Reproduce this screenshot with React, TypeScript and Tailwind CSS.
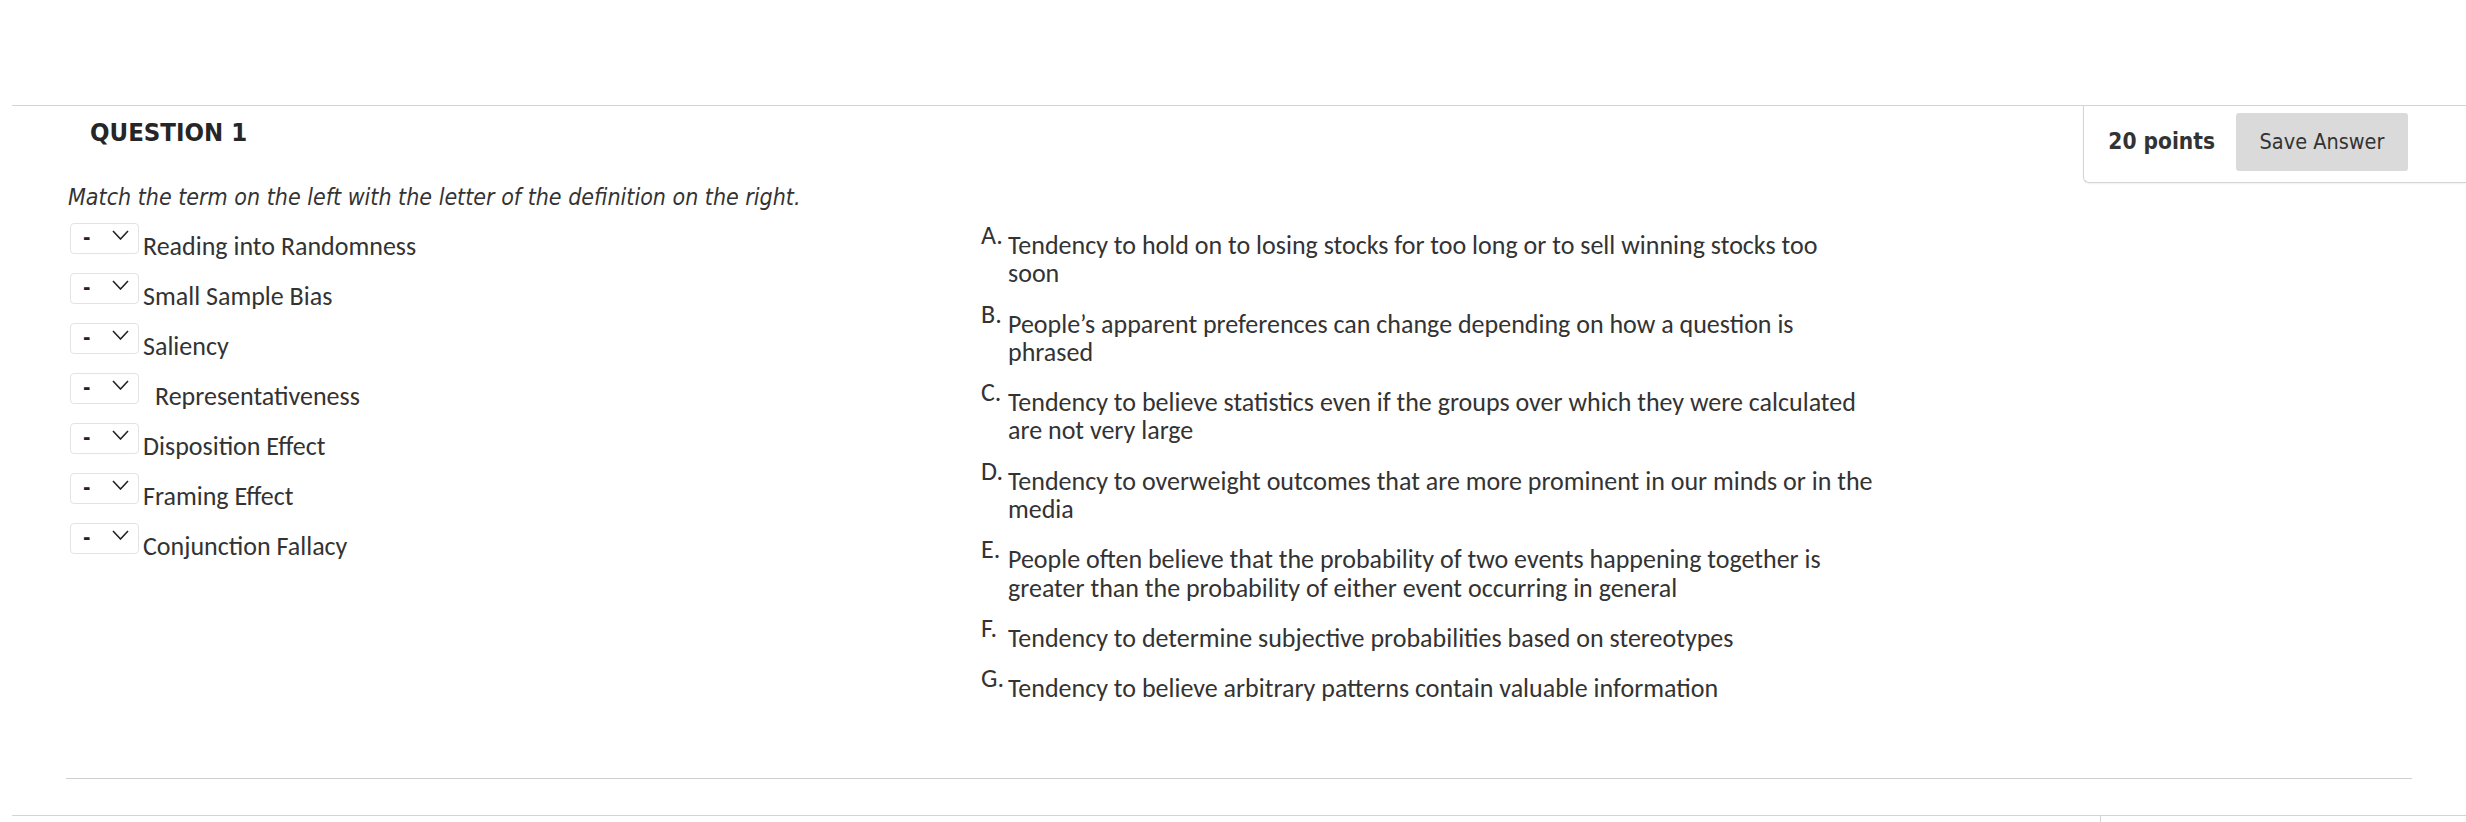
import React from 'react';

const terms = [
  { label: 'Reading into Randomness', indent: false },
  { label: 'Small Sample Bias', indent: false },
  { label: 'Saliency', indent: false },
  { label: 'Representativeness', indent: true },
  { label: 'Disposition Effect', indent: false },
  { label: 'Framing Effect', indent: false },
  { label: 'Conjunction Fallacy', indent: false },
];

// each entry is the lines as they wrap in the original
const answers = [
  { letter: 'A.', lines: ['Tendency to hold on to losing stocks for too long or to sell winning stocks too', 'soon'] },
  { letter: 'B.', lines: ['People\u2019s apparent preferences can change depending on how a question is', 'phrased'] },
  { letter: 'C.', lines: ['Tendency to believe statistics even if the groups over which they were calculated', 'are not very large'] },
  { letter: 'D.', lines: ['Tendency to overweight outcomes that are more prominent in our minds or in the', 'media'] },
  { letter: 'E.', lines: ['People often believe that the probability of two events happening together is', 'greater than the probability of either event occurring in general'] },
  { letter: 'F.', lines: ['Tendency to determine subjective probabilities based on stereotypes'] },
  { letter: 'G.', lines: ['Tendency to believe arbitrary patterns contain valuable information'] },
];

const uiFont = "font-['DejaVu_Sans_Condensed','DejaVu_Sans',sans-serif] font-stretch-condensed";
const bodyFont = "font-['Carlito','Lato',sans-serif]";

const Dropdown = () => (
  <div className="flex h-[31px] w-[69px] shrink-0 items-center justify-between rounded-[4px] border border-[#e3e3e3] bg-white pl-[12px] pr-[9px]">
    <span className={`${uiFont} -mt-[4px] text-[20px] font-bold leading-none text-[#222]`}>-</span>
    <svg width="17" height="10" viewBox="0 0 17 10" className="-mt-[7px]">
      <polyline points="1,1 8.5,9 16,1" fill="none" stroke="#222" strokeWidth="1.6" />
    </svg>
  </div>
);

const App = () => {
  return (
    <div className="min-h-[822px] w-full overflow-hidden bg-white pt-[105px] text-[#333]">
      {/* Question block */}
      <div className="ml-[12px] border-t border-[#d4d4d4]">
        {/* Header */}
        <div className="flex items-start justify-between">
          <h3 className={`${uiFont} pl-[78px] pt-[11px] text-[25.5px] font-bold leading-[30px] text-[#262626]`}>
            QUESTION 1
          </h3>
          <div className="flex items-center gap-[21px] rounded-bl-[6px] border-b border-l border-[#d4d4d4] pb-[11px] pl-[24px] pr-[58px] pt-[7px] shadow-[0_1px_2px_rgba(0,0,0,0.06)]">
            <span className={`${uiFont} text-[22.5px] font-bold text-[#333]`}>20 points</span>
            <button className={`${uiFont} h-[58px] w-[172px] rounded-[3px] bg-[#dadada] text-[21.5px] text-[#333]`}>
              Save Answer
            </button>
          </div>
        </div>

        {/* Instructions */}
        <p className={`${uiFont} pl-[56px] text-[23px] italic leading-[28px] text-[#333]`}>
          Match the term on the left with the letter of the definition on the right.
        </p>

        {/* Matching columns */}
        <div className={`${bodyFont} mt-[12px] grid grid-cols-[911px_1fr] pl-[58px] text-[26px] text-[#333]`}>
          <div className="flex flex-col gap-[13px]">
            {terms.map((t) => (
              <div key={t.label} className="flex items-start">
                <Dropdown />
                <span className={`mt-[9px] leading-[28px] ${t.indent ? 'pl-[16px]' : 'pl-[4px]'}`}>{t.label}</span>
              </div>
            ))}
          </div>

          <div className="-mt-[2px] flex flex-col gap-[12px]">
            {answers.map((a) => (
              <div key={a.letter} className="flex items-start">
                <span className="w-[27px] shrink-0 leading-[28px]">{a.letter}</span>
                <div className="mt-[10px] leading-[28.3px]">
                  {a.lines.map((l) => (
                    <div key={l} className="whitespace-nowrap">{l}</div>
                  ))}
                </div>
              </div>
            ))}
          </div>
        </div>

        {/* Bottom separator */}
        <div className="mx-[54px] mt-[75px] border-t border-[#cfcfcf]" />
      </div>

      {/* Next question (cut off) */}
      <div className="ml-[12px] mt-[36px] flex justify-end border-t border-[#d4d4d4]">
        <div className="h-[40px] w-[366px] border-l border-[#d4d4d4]" />
      </div>
    </div>
  );
};

export default App;
